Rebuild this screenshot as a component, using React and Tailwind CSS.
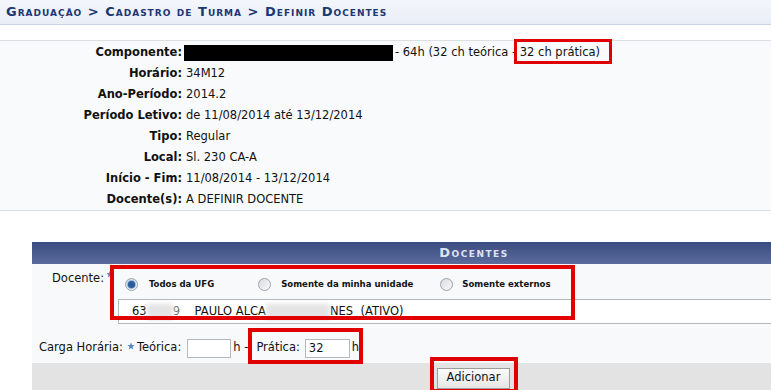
import React from "react";

const rows = [
  ["Horário:", "34M12"],
  ["Ano-Período:", "2014.2"],
  ["Período Letivo:", "de 11/08/2014 até 13/12/2014"],
  ["Tipo:", "Regular"],
  ["Local:", "Sl. 230 CA-A"],
  ["Início - Fim:", "11/08/2014 - 13/12/2014"],
  ["Docente(s):", "A DEFINIR DOCENTE"],
];

const Star = () => (
  <svg viewBox="0 0 10 10" className="w-[8px] h-[8px] inline-block">
    <path d="M5 0.5 L6.2 3.6 L9.5 3.8 L7 5.9 L7.8 9.3 L5 7.4 L2.2 9.3 L3 5.9 L0.5 3.8 L3.8 3.6 Z" fill="#5b86c7" />
  </svg>
);

const Radio = ({ checked }) => (
  <span className="inline-flex w-[13px] h-[13px] rounded-full border border-[#9aa3ad] bg-gradient-to-br from-[#d8dbe0] to-[#fafafa] items-center justify-center">
    {checked && <span className="w-[7px] h-[7px] rounded-full bg-[#2b5c9a] ring-1 ring-[#8fb3dc]" />}
  </span>
);

const Blur = ({ w }) => (
  <span className={`inline-block ${w} h-[16px] align-middle bg-[#e4e4e4] blur-[2px]`} />
);

export default function App() {
  return (
    <div
      className="relative w-[771px] h-[390px] overflow-hidden bg-white text-[11.5px] text-[#111]"
      style={{ fontFamily: '"DejaVu Sans", Verdana, sans-serif' }}
    >
      {/* breadcrumb title */}
      <div className="h-[25px] bg-gradient-to-b from-[#f3f6fb] to-[#e9eef6] border-b border-[#c9d3e3] pl-[6px] flex items-center">
        <span className="text-[13px] font-bold text-[#1c3773] [font-variant:small-caps] tracking-[1px]">
          Graduação &gt; Cadastro de Turma &gt; Definir Docentes
        </span>
      </div>

      {/* class info */}
      <div className="mt-[15px] border-t border-b border-[#dcdfe4] bg-[#f9fafc] pt-[1px]">
        <div className="grid grid-cols-[182px_1fr] auto-rows-[21px] items-center">
          <div className="text-right font-bold">Componente:</div>
          <div className="flex items-center pl-[2px]">
            <span className="inline-block w-[209px] h-[16px] bg-black" />
            <span className="ml-[2px]">- 64h (32 ch teórica - 32 ch prática)</span>
          </div>
          {rows.map(([k, v]) => (
            <React.Fragment key={k}>
              <div className="text-right font-bold">{k}</div>
              <div className="pl-[4px]">{v}</div>
            </React.Fragment>
          ))}
        </div>
      </div>

      {/* docentes form */}
      <div className="ml-[32px] mt-[31px] w-[884px]">
        <div className="h-[22px] bg-gradient-to-b from-[#3a4b7f] to-[#5b6b9c] flex items-center justify-center">
          <span className="text-[13px] font-bold text-[#dde4f3] [font-variant:small-caps] tracking-[1.5px]">Docentes</span>
        </div>
        <div className="bg-[#f8f9fb] pt-[6px] h-[99px]">
          <div className="flex">
            <div className="w-[86px] pl-[20px] shrink-0 flex items-start">
              <span>Docente:</span>
              <span className="ml-[2px] flex"><Star /></span>
            </div>
            <div className="flex-1">
              <div
                className="flex items-center h-[29px] text-[9.5px] font-bold pl-[7px]"
                style={{ fontFamily: '"DejaVu Sans Condensed", "DejaVu Sans", sans-serif' }}
              >
                <Radio checked />
                <span className="ml-[11px]">Todos da UFG</span>
                <span className="ml-[44px] flex"><Radio /></span>
                <span className="ml-[10px]">Somente da minha unidade</span>
                <span className="ml-[27px] flex"><Radio /></span>
                <span className="ml-[9px]">Somente externos</span>
              </div>
              <div className="h-[25px] border border-[#b5b8bd] bg-white flex items-center pl-[13px] whitespace-pre">
                63<Blur w="w-[26px]" /><span className="text-[#777]">9</span>    PAULO ALCA<Blur w="w-[64px]" />NES  (ATIVO)
              </div>
            </div>
          </div>
          <div className="flex items-center mt-[12px] h-[24px] pl-[7px]">
            <span>Carga Horária:</span>
            <span className="ml-[4px] -mt-[5px] flex"><Star /></span>
            <span className="ml-[2px]">Teórica:</span>
            <span className="ml-[6px] w-[44px] h-[19px] border border-[#b5b8bd] bg-white" />
            <span className="ml-[2px]">h - </span>
            <span className="ml-[8px]">Prática:</span>
            <span className="ml-[5px] w-[45px] h-[19px] border border-[#b5b8bd] bg-white pl-[3px] leading-[17px]">32</span>
            <span className="ml-[2px]">h</span>
          </div>
        </div>
        <div className="h-[30px] bg-[#e3e3e3] flex items-center pl-[405px]">
          <button className="w-[73px] h-[21px] border border-[#9c9c9c] bg-gradient-to-b from-[#fbfbfb] to-[#e6e6e6] text-[11.5px] text-[#111]">
            Adicionar
          </button>
        </div>
      </div>

      {/* red annotation boxes */}
      <div className="absolute left-[514px] top-[39px] w-[98px] h-[25px] border-[3px] border-[#e10000]" />
      <div className="absolute left-[110px] top-[265px] w-[465px] h-[55px] border-[4px] border-[#e10000]" />
      <div className="absolute left-[248px] top-[328px] w-[115px] h-[36px] border-[4px] border-[#e10000]" />
      <div className="absolute left-[430px] top-[357px] w-[88px] h-[36px] border-[4px] border-[#e10000]" />
    </div>
  );
}
